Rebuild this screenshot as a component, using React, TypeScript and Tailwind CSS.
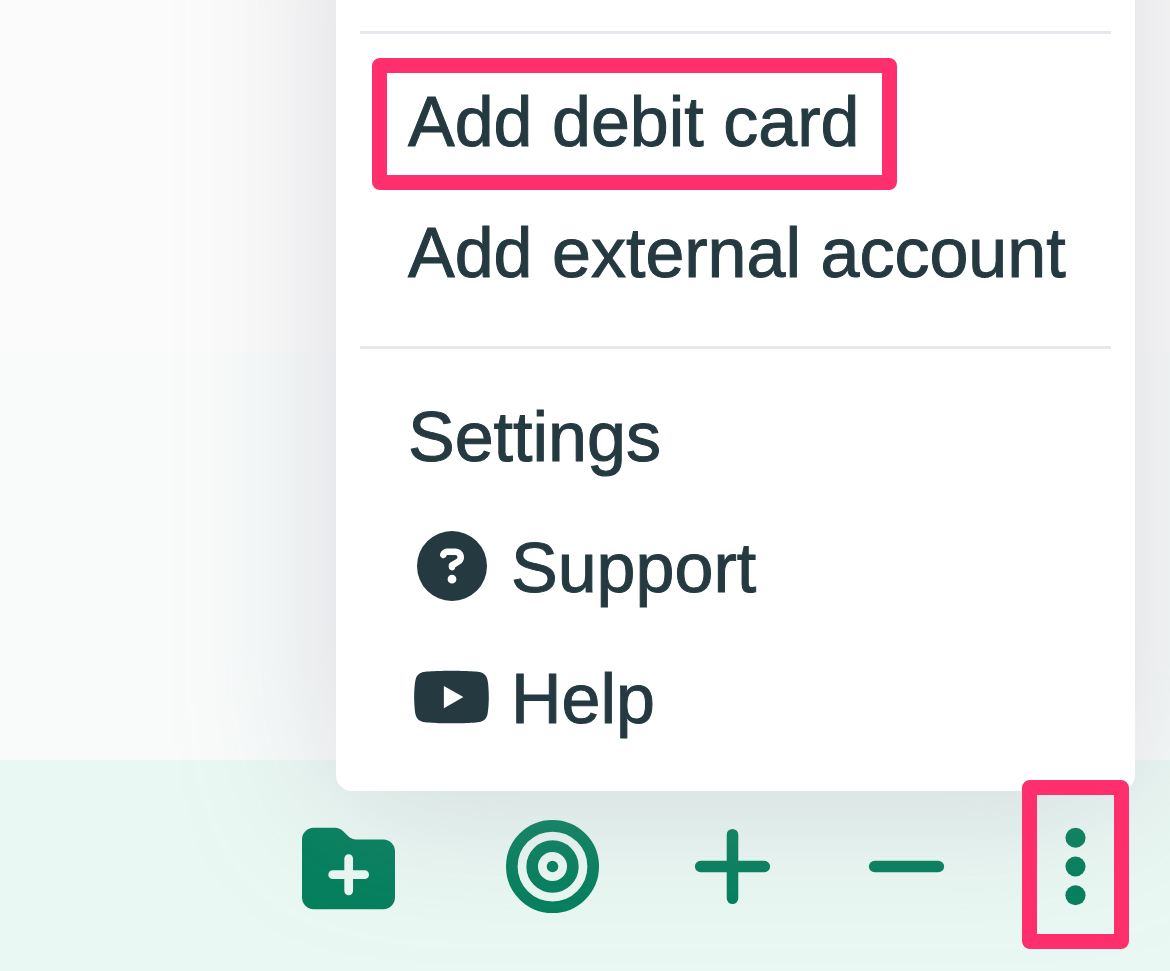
import React from 'react';
import { FaCircleQuestion, FaYoutube } from 'react-icons/fa6';

interface MenuItemProps {
  label: string;
  icon?: React.ReactNode;
  highlighted?: boolean;
}

const MenuItem: React.FC<MenuItemProps> = ({ label, icon, highlighted }) => (
  <li>
    <button
      type="button"
      className="relative flex items-center h-[131px] w-full pl-12 pb-[6px] text-left whitespace-nowrap cursor-pointer"
    >
      {icon && <span className="flex justify-center w-[87px] mr-4 mb-1">{icon}</span>}
      <span>{label}</span>
      {/* Frame around the item being pointed out */}
      {highlighted && (
        <span className="absolute -top-px bottom-0 left-3 w-[525px] border-[15px] border-[#ff2e6c] rounded-lg" />
      )}
    </button>
  </li>
);

const Divider = () => <hr className="my-[25px] border-0 h-[3px] bg-[#e7e8ee]" />;

const Menu = () => (
  <nav
    aria-label="More options"
    className="absolute z-10 -top-40 -bottom-[31px] right-[35px] w-[799px] flex flex-col justify-end px-6 pb-6 bg-white rounded-2xl text-[70px] leading-[80px] text-[#243a40] [-webkit-text-stroke:1px_#243a40] shadow-[0_8px_150px_rgba(160,158,172,0.36)]"
  >
    <Divider />
    <ul>
      <MenuItem label="Add debit card" highlighted />
      <MenuItem label="Add external account" />
    </ul>
    <Divider />
    <ul>
      <MenuItem label="Settings" />
      <MenuItem label="Support" icon={<FaCircleQuestion className="w-[70px] h-[70px]" />} />
      <MenuItem label="Help" icon={<FaYoutube className="w-[79px] h-[70px]" />} />
    </ul>
  </nav>
);

const Toolbar = () => (
  <footer className="flex items-center justify-end gap-[93px] h-[211px] pt-px pr-[60px] bg-[#eaf8f3] text-[#047f5c]">
    <button type="button" aria-label="New folder" className="mt-1 mr-[18px] cursor-pointer">
      <svg viewBox="0 0 512 512" className="w-[93px] h-[93px]">
        <defs>
          <mask id="folder-plus">
            <rect width="512" height="512" fill="white" />
            <path d="M257 201v178M169 290h176" stroke="black" strokeWidth="48" strokeLinecap="round" />
          </mask>
        </defs>
        <path
          mask="url(#folder-plus)"
          fill="currentColor"
          d="M64 32h117.500c17 0 33.300 6.700 45.300 18.700l26.500 26.600c12 12 28.300 18.700 45.200 18.700H448c35.300 0 64 28.700 64 64v256c0 35.300-28.700 64-64 64H64c-35.300 0-64-28.700-64-64V96c0-35.300 28.700-64 64-64z"
        />
      </svg>
    </button>
    <button type="button" aria-label="Goals" className="cursor-pointer">
      <svg viewBox="0 0 512 512" className="w-[93px] h-[93px]" fill="none" stroke="currentColor" strokeWidth="64">
        <circle cx="256" cy="256" r="224" />
        <circle cx="256" cy="256" r="112" />
        <circle cx="256" cy="256" r="32" fill="currentColor" stroke="none" />
      </svg>
    </button>
    <button type="button" aria-label="Add" className="cursor-pointer">
      <svg viewBox="0 0 448 512" className="w-[81px] h-[93px]" stroke="currentColor" strokeWidth="64" strokeLinecap="round">
        <path d="M224 80v352M48 256h352" />
      </svg>
    </button>
    <button type="button" aria-label="Remove" className="cursor-pointer">
      <svg viewBox="0 0 448 512" className="w-[81px] h-[93px]" stroke="currentColor" strokeWidth="64" strokeLinecap="round">
        <path d="M48 256h352" />
      </svg>
    </button>
    <button type="button" aria-label="More" className="relative flex justify-center w-[70px] cursor-pointer">
      <svg viewBox="0 0 128 512" className="w-[23px] h-[93px]" fill="currentColor">
        <circle cx="64" cy="96" r="56" />
        <circle cx="64" cy="256" r="56" />
        <circle cx="64" cy="416" r="56" />
      </svg>
      <span className="absolute z-20 -left-[18px] -right-[19px] -top-10 -bottom-9 border-[15px] border-[#ff2e6c] rounded-lg" />
    </button>
  </footer>
);

export default function App() {
  return (
    <div className="flex flex-col min-h-screen overflow-hidden font-['Liberation_Sans',Arial,sans-serif]">
      <main className="relative flex flex-col flex-1 bg-[#fbfbfb]">
        <div className="h-[352px]" />
        <div className="flex-1 bg-[#f8fbfa]" />
        <Menu />
      </main>
      <Toolbar />
    </div>
  );
}
